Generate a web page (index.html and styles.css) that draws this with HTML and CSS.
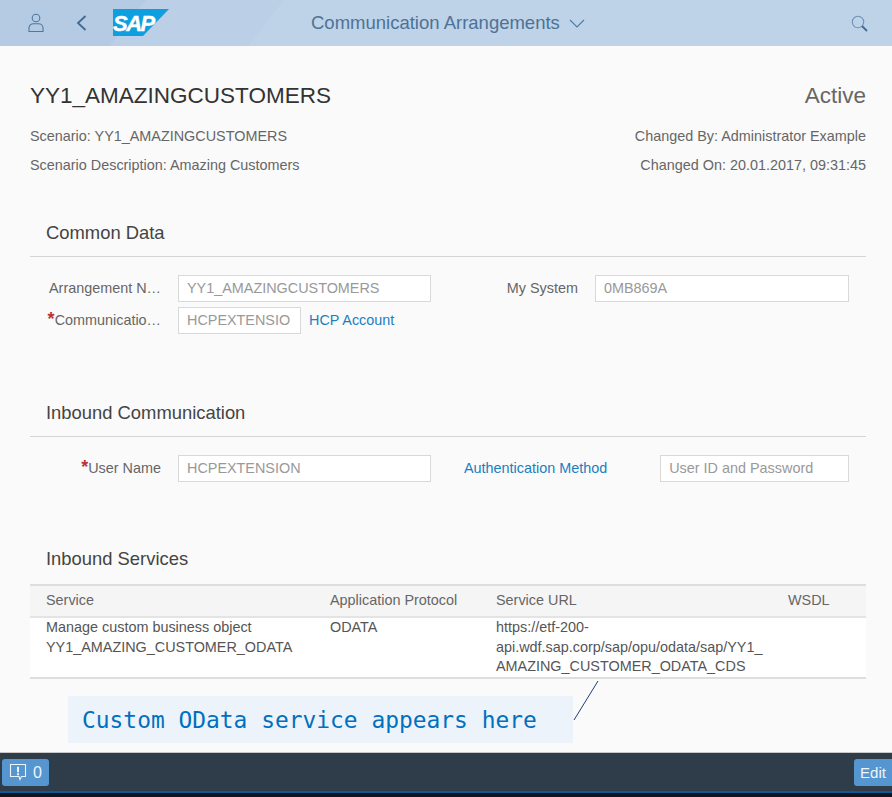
FILE: index.html
```html
<!DOCTYPE html>
<html lang="en">
<head>
    <meta charset="UTF-8">
    <meta name="viewport" content="width=device-width, initial-scale=1.0">
    <title>Communication Arrangements</title>
    <link rel="stylesheet" href="styles.css">
</head>
<body>
    <!-- Shell bar -->
    <header class="shell">
        <svg class="shell-user" width="16" height="20" viewBox="0 0 16 20" fill="none" stroke="#51779c" stroke-width="1.1">
            <circle cx="8" cy="5" r="3.8"/>
            <path d="M1 18.5h14v-3.5c0-2.6-2.2-4.2-4.5-4.2h-5C3.200 10.800 1 12.400 1 15z"/>
        </svg>
        <svg class="shell-back" width="11" height="16" viewBox="0 0 11 16" fill="none" stroke="#3f6a94" stroke-width="1.800">
            <path d="M9.500 1L2 8l7.500 7"/>
        </svg>
        <svg class="shell-logo" width="56" height="27" viewBox="0 0 56 27">
            <path fill="#0e9fe0" d="M0 0h56L30 27H0z"/>
        </svg>
        <span class="logo-text">SAP</span>
        <div class="shell-title">
            <span>Communication Arrangements</span>
            <svg width="16" height="9" viewBox="0 0 16 9" fill="none" stroke="#4f7aa3" stroke-width="1.100">
                <path d="M1 1l7 7 7-7"/>
            </svg>
        </div>
        <svg class="shell-search" width="17" height="17" viewBox="0 0 17 17" fill="none" stroke="#6d93b8" stroke-width="1.100">
            <circle cx="7" cy="7" r="5.700"/>
            <path stroke="#3f6a94" stroke-width="1.800" d="M11 11l5 5"/>
        </svg>
    </header>

    <main class="page">
        <!-- Object header -->
        <div class="object-head">
            <div>
                <h1>YY1_AMAZINGCUSTOMERS</h1>
                <p>Scenario: YY1_AMAZINGCUSTOMERS</p>
                <p>Scenario Description: Amazing Customers</p>
            </div>
            <div class="object-side">
                <div class="status">Active</div>
                <p>Changed By: Administrator Example</p>
                <p>Changed On: 20.01.2017, 09:31:45</p>
            </div>
        </div>

        <section class="block block-common">
            <h2>Common Data</h2>
            <div class="form-rows">
                <div class="form-row">
                    <label class="field-label">Arrangement N…</label>
                    <div class="input input-wide">YY1_AMAZINGCUSTOMERS</div>
                    <label class="side-label">My System</label>
                    <div class="input input-system">0MB869A</div>
                </div>
                <div class="form-row">
                    <label class="field-label"><span class="req">*</span>Communicatio…</label>
                    <div class="input input-short">HCPEXTENSIO</div>
                    <a class="link" href="#">HCP Account</a>
                </div>
            </div>
        </section>

        <section class="block block-inbound">
            <h2>Inbound Communication</h2>
            <div class="form-rows">
                <div class="form-row">
                    <label class="field-label"><span class="req">*</span>User Name</label>
                    <div class="input input-wide">HCPEXTENSION</div>
                    <a class="link link-auth" href="#">Authentication Method</a>
                    <div class="input input-auth">User ID and Password</div>
                </div>
            </div>
        </section>

        <section class="block block-services">
            <h2 class="table-title">Inbound Services</h2>
            <table>
                <thead>
                    <tr>
                        <th class="col-service">Service</th>
                        <th class="col-protocol">Application Protocol</th>
                        <th class="col-url">Service URL</th>
                        <th>WSDL</th>
                    </tr>
                </thead>
                <tbody>
                    <tr>
                        <td>Manage custom business object<br>YY1_AMAZING_CUSTOMER_ODATA</td>
                        <td>ODATA</td>
                        <td>https://etf-200-<br>api.wdf.sap.corp/sap/opu/odata/sap/YY1_<br>AMAZING_CUSTOMER_ODATA_CDS</td>
                        <td></td>
                    </tr>
                </tbody>
            </table>
        </section>

        <!-- Callout drawn over the screenshot -->
        <div class="callout">Custom OData service appears here</div>
        <svg class="callout-line" width="26" height="41" viewBox="0 0 26 41">
            <path d="M25 1L1 40" stroke="#1d3f7a" fill="none"/>
        </svg>
    </main>

    <footer class="foot">
        <button class="foot-btn msg-btn">
            <svg width="18" height="19" viewBox="0 0 18 19" fill="none" stroke="#eaf2fa" stroke-width="1.100">
                <path d="M1.500 1.500h15v12h-4l-1.500 3-1-3h-8.500z"/>
                <path stroke-width="2" d="M9 3.800v5.500M9 10.300v2"/>
            </svg>
            <span>0</span>
        </button>
        <button class="foot-btn edit-btn">Edit</button>
    </footer>
</body>
</html>
```

FILE: styles.css
```css
/* Reset */
body, h1, h2, p, table, th, td, button {
    margin: 0;
    padding: 0;
    box-sizing: border-box;
}

body {
    height: 797px;
    display: flex;
    flex-direction: column;
    overflow: hidden;
    font-family: "Liberation Sans", Arial, sans-serif;
    font-size: 14.4px;
    color: #555555;
    background-color: #fafafa;
}

/* Shell bar */
.shell {
    position: relative;
    flex: 0 0 46px;
    display: flex;
    align-items: center;
    background: linear-gradient(128deg, #b4cbe3 115px, #bbcfe6 115px, #bbcfe6 224px, #bed2e8 224px);
}

.shell-user {
    margin-left: 28px;
}

.shell-back {
    margin-left: 32px;
}

.shell-logo {
    margin-left: 26px;
    margin-top: -1px;
}

.logo-text {
    position: absolute;
    left: 113px;
    top: 13px;
    font-size: 22px;
    line-height: 22px;
    font-weight: bold;
    font-style: italic;
    letter-spacing: -1.500px;
    -webkit-text-stroke: 0.4px #ffffff;
    color: #ffffff;
}

.shell-title {
    margin-left: 142px;
    display: flex;
    align-items: center;
    gap: 9px;
    font-size: 18.5px;
    color: #4d7296;
}

.shell-search {
    margin-left: auto;
    margin-right: 24px;
}

/* Page */
.page {
    position: relative;
    flex: 1;
    padding: 0 26px 0 30px;
}

.object-head {
    display: flex;
    justify-content: space-between;
    padding-top: 36px;
    color: #666666;
}

.object-head p {
    line-height: 16px;
    margin-top: 13px;
}

.object-head h1 {
    font-size: 22.5px;
    line-height: 28px;
    font-weight: normal;
    color: #333333;
    margin-bottom: 18px;
}

.object-side {
    text-align: right;
}

.status {
    font-size: 22.5px;
    line-height: 28px;
    color: #666666;
    margin-bottom: 18px;
}

/* Sections */
.block h2 {
    font-size: 18.4px;
    line-height: 22px;
    font-weight: normal;
    padding: 0 0 12px 16px;
    border-bottom: 1px solid #d5d5d5;
    color: #444444;
}

.block-common {
    margin-top: 49px;
}

.block-inbound {
    margin-top: 68px;
}

.block-services {
    margin-top: 66px;
}

.form-rows {
    display: flex;
    flex-direction: column;
    gap: 5px;
    padding-top: 18px;
}

.form-row {
    display: flex;
    align-items: center;
    height: 27px;
}

.field-label {
    width: 131px;
    flex: none;
    margin-bottom: 2px;
    text-align: right;
    white-space: nowrap;
    color: #666666;
}

.req {
    color: #bb3333;
    font-size: 18px;
    line-height: 14px;
    font-weight: bold;
}

.input {
    box-sizing: border-box;
    margin-left: 17px;
    height: 27px;
    line-height: 25px;
    padding: 0 8px;
    flex: none;
    border: 1px solid #d9d9d9;
    background-color: #ffffff;
    color: #999999;
    white-space: nowrap;
    overflow: hidden;
}

.input-wide {
    width: 253px;
}

.input-system {
    width: 254px;
}

.input-short {
    width: 123px;
}

.input-auth {
    width: 189px;
    margin-left: 53px;
}

.side-label {
    width: 147px;
    flex: none;
    margin-bottom: 2px;
    text-align: right;
    color: #666666;
}

.link {
    margin-left: 8px;
    margin-bottom: 2px;
    color: #1a7fc0;
    text-decoration: none;
    white-space: nowrap;
}

.link-auth {
    margin-left: 33px;
}

/* Services table */
.block h2.table-title {
    border-bottom: none;
    padding-bottom: 14px;
}

table {
    width: 100%;
    border-collapse: collapse;
    table-layout: fixed;
    background-color: #ffffff;
}

th {
    height: 32px;
    padding: 0 0 3px 16px;
    text-align: left;
    font-weight: normal;
    color: #666666;
    background-color: #f5f5f5;
    border-top: 2px solid #dedede;
    border-bottom: 2px solid #e4e4e4;
}

td {
    height: 58px;
    padding: 0 0 0 16px;
    vertical-align: top;
    line-height: 19.500px;
    border-bottom: 2px solid #dedede;
    white-space: nowrap;
}

.col-service {
    width: 284px;
}

.col-protocol {
    width: 166px;
}

.col-url {
    width: 292px;
}

/* Callout */
.callout {
    box-sizing: border-box;
    position: absolute;
    left: 68px;
    top: 650px;
    width: 505px;
    height: 47px;
    padding-left: 14px;
    line-height: 49px;
    font-family: "DejaVu Sans Mono", monospace;
    font-size: 22.9px;
    color: #0070c0;
    background-color: #edf3fa;
}

.callout-line {
    position: absolute;
    left: 573px;
    top: 634px;
}

/* Footer */
.foot {
    box-sizing: border-box;
    flex: 0 0 45px;
    display: flex;
    justify-content: space-between;
    padding-top: 6px;
    background-color: #2f3c4a;
    border-top: 1px solid #c8c8c8;
    border-bottom: 4px solid #0f1620;
    box-shadow: inset 0 -2px 0 #0f5a96;
}

.foot-btn {
    height: 27px;
    border: none;
    border-radius: 3px;
    background-color: #5596d0;
    color: #eef4fa;
    font-family: inherit;
    font-size: 15px;
}

.msg-btn {
    width: 47px;
    margin-left: 2px;
    display: flex;
    align-items: center;
    justify-content: center;
    gap: 6px;
    font-size: 16px;
}

.edit-btn {
    width: 38px;
    border-radius: 3px 0 0 3px;
}
```
